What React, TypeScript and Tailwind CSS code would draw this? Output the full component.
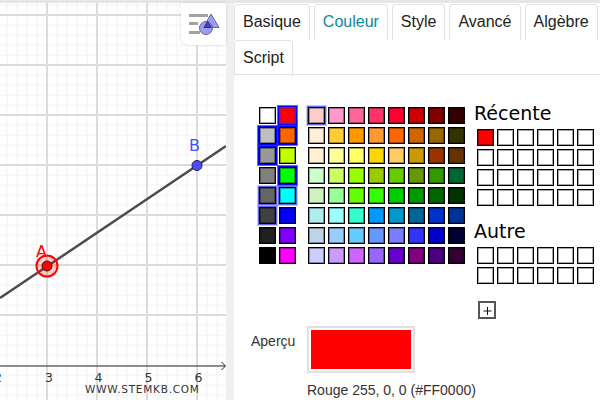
const SANS = "font-['Liberation_Sans',Arial,sans-serif]";
const DEJAVU = "font-['DejaVu_Sans',sans-serif]";

const TABS_TOP = ["Basique", "Couleur", "Style", "Avancé", "Algèbre"];

const PRIMARY = [
  ["#ffffff", "#ff0000"],
  ["#bfbfbf", "#ff6600"],
  ["#999999", "#c0ff00"],
  ["#808080", "#00ff00"],
  ["#666666", "#00ffff"],
  ["#404040", "#0000ff"],
  ["#202020", "#7f00ff"],
  ["#000000", "#ff00ff"],
];

const PALETTE = [
  ["#ffcccc", "#ff99cc", "#ff6699", "#ff3366", "#ff0033", "#cc0000", "#800000", "#330000"],
  ["#ffefd5", "#ffcc33", "#ff9900", "#ff9933", "#ff6600", "#cc6600", "#996600", "#333300"],
  ["#ffefd5", "#ffff99", "#ffff66", "#ffd700", "#ffcc66", "#cc9900", "#993300", "#663300"],
  ["#ccffcc", "#ccff66", "#99ff00", "#99cc00", "#66cc00", "#669900", "#339900", "#006633"],
  ["#d0f0c0", "#99ff99", "#66ff00", "#33ff00", "#00cc00", "#009900", "#006600", "#003300"],
  ["#afeeee", "#99ffff", "#33ffcc", "#0099ff", "#0099cc", "#006699", "#0033cc", "#003399"],
  ["#bcd4e6", "#99ccff", "#66ccff", "#6699ff", "#7d7dff", "#3333ff", "#0000cd", "#000033"],
  ["#ccccff", "#cc99ff", "#cc66ff", "#9966ff", "#6600cc", "#800080", "#4b0082", "#330033"],
];

// swatches drawn with a focus ring in the reference, keyed by colour
const STRONG_RING = ["#bfbfbf", "#999999", "#ff6600", "#00ff00"];
const SOFT_RING = ["#666666", "#404040", "#00ffff"];

function Swatch({ color, ring = false, soft = false }: { color?: string; ring?: boolean; soft?: boolean }) {
  let edge = "shadow-[inset_0_0_0_1px_#000,inset_0_0_0_2px_rgba(0,0,0,0.35)]";
  if (soft || (ring && color && SOFT_RING.includes(color))) {
    edge = "shadow-[inset_0_0_0_1px_#000,inset_0_0_0_2px_rgba(0,0,0,0.35),0_0_0_1px_#6464f0,0_0_0_2px_rgba(100,100,240,0.35)]";
  } else if (ring && color === "#ff0000") {
    edge = "shadow-[inset_0_0_0_1px_#7a1a90,inset_0_0_0_2px_rgba(122,26,144,0.5),0_0_0_1px_#0000ff,0_0_0_2px_rgba(0,0,255,0.6)]";
  } else if (ring && color && STRONG_RING.includes(color)) {
    edge = "shadow-[inset_0_0_0_1px_#000,inset_0_0_0_2px_rgba(0,0,0,0.35),0_0_0_1px_#0000ff,0_0_0_2px_rgba(0,0,255,0.6)]";
  }
  return <div className={`w-[17px] h-[17px] ${edge}`} style={{ backgroundColor: color ?? "#ffffff" }} />;
}

function EmptyGrid({ rows, first }: { rows: number; first?: string }) {
  return (
    <div className="grid grid-cols-6 gap-[3px] w-[117px]">
      {Array.from({ length: rows * 6 }).map((_, i) => (
        <Swatch key={i} color={i === 0 ? first : undefined} />
      ))}
    </div>
  );
}

function StyleIcon() {
  return (
    <svg width="32" height="26" viewBox="0 0 32 26">
      <rect x="0" y="1" width="19" height="3" fill="#a3a3a3" />
      <rect x="0" y="9" width="9" height="3" fill="#a3a3a3" />
      <rect x="0" y="18" width="11" height="3" fill="#a3a3a3" />
      <path d="M22 1 L30 14.5 H14 Z" fill="#9c9cf5" stroke="#6a6a8a" strokeWidth="1" />
      <circle cx="17" cy="15" r="6.5" fill="#9c9cf5" stroke="#6a6a8a" strokeWidth="1" />
      <path d="M18.5 8.5 L22.6 14.5 H15 Z" fill="#3c3ce0" stroke="#33335a" strokeWidth="1" />
    </svg>
  );
}

function Graph() {
  const minorX = Array.from({ length: 23 }, (_, i) => 7 + i * 10);
  const minorY = Array.from({ length: 40 }, (_, i) => 5 + i * 10);
  const majorX = [47, 97, 147, 197];
  const majorY = [15, 65, 115, 165, 215, 265, 315];
  return (
    <svg width="226" height="397" viewBox="0 3 226 397" className="block">
      {minorX.map((x) => (
        <line key={x} x1={x} x2={x} y1={3} y2={400} stroke="#f2f2f2" strokeWidth="1" />
      ))}
      {minorY.map((y) => (
        <line key={y} x1={0} x2={226} y1={y} y2={y} stroke="#f2f2f2" strokeWidth="1" />
      ))}
      {majorX.map((x) => (
        <line key={x} x1={x} x2={x} y1={3} y2={400} stroke="#dcdcdc" strokeWidth="2" />
      ))}
      {majorY.map((y) => (
        <line key={y} x1={0} x2={226} y1={y} y2={y} stroke="#dcdcdc" strokeWidth="2" />
      ))}

      <line x1="0" x2="225" y1="366" y2="366" stroke="#222" strokeWidth="1" />
      <path d="M221.5 362 L225.5 366 L221.5 370" fill="none" stroke="#222" strokeWidth="1" />

      <line x1="0" y1="298" x2="226" y2="146" stroke="#4d4d4d" strokeWidth="2.5" />

      <circle cx="47" cy="266" r="10.5" fill="#ff0000" fillOpacity="0.2" stroke="#ff0000" strokeWidth="2" />
      <circle cx="47" cy="266" r="5" fill="#ff0000" stroke="#4d1010" strokeWidth="1" />
      <circle cx="197" cy="165.5" r="5" fill="#4d4dff" stroke="#1c1c5c" strokeWidth="1" />

      <g className={DEJAVU}>
        <text x="36" y="257" fontSize="16" fill="#ff0000">A</text>
        <text x="189" y="151" fontSize="16" fill="#4d4dff">B</text>
        <g fontSize="12.5" fill="#333">
          <text x="-6" y="382">2</text>
          <text x="45" y="382">3</text>
          <text x="94.5" y="382">4</text>
          <text x="144.5" y="382">5</text>
          <text x="194.5" y="382">6</text>
        </g>
        <text x="85" y="393" fontSize="10.5" letterSpacing="0.75" fill="#333">WWW.STEMKB.COM</text>
      </g>
    </svg>
  );
}

function Tab({ label, active = false }: { label: string; active?: boolean }) {
  return (
    <div
      className={`h-[36px] px-2 pt-[5px] border border-[#e2e2e2] rounded-t-[4px] mr-1 text-base leading-[24px] ${
        active ? "border-b-white text-[#0b8a9a] bg-white" : "border-b-0 text-[#222]"
      }`}
    >
      {label}
    </div>
  );
}

export default function App() {
  return (
    <div className={`w-[600px] h-[400px] overflow-hidden bg-white flex flex-col ${SANS}`}>
      <div className="h-[3px] bg-[#e6e6e6] shrink-0" />
      <div className="flex flex-1 min-h-0">
        {/* Graphics view */}
        <div className="relative w-[226px] shrink-0">
          <Graph />
          <div className="absolute top-0 right-0 w-[45px] h-[42px] bg-white rounded-bl-lg shadow-[0_0_3px_rgba(0,0,0,0.15)] pl-[8px] pt-[10px]">
            <StyleIcon />
          </div>
        </div>
        <div className="w-[8px] shrink-0 bg-[#f0f0f0]" />

        {/* Properties panel */}
        <div className="flex-1 min-w-0">
          <div className="flex pt-px">
            {TABS_TOP.map((t) => (
              <Tab key={t} label={t} active={t === "Couleur"} />
            ))}
          </div>
          <div className="flex border-b border-[#e2e2e2] -mt-px pt-px h-[36px]">
            <Tab label="Script" />
          </div>

          <div className="flex pl-[25px] pt-[32px]">
            <div className="grid grid-cols-2 gap-[3px] h-fit">
              {PRIMARY.flat().map((c) => (
                <Swatch key={c} color={c} ring />
              ))}
            </div>
            <div className="grid grid-cols-8 gap-[3px] ml-[12px] h-fit">
              {PALETTE.flat().map((c, i) => (
                <Swatch key={i} color={c} soft={i === 0} />
              ))}
            </div>
            <div className={`ml-[12px] -mt-[5px] text-black ${DEJAVU}`}>
              <div className="text-[19px] leading-[22px] mb-[5px] -ml-[3px]">Récente</div>
              <EmptyGrid rows={4} first="#ff0000" />
              <div className="text-[19px] leading-[22px] mt-[14px] mb-[5px] -ml-[3px]">Autre</div>
              <EmptyGrid rows={2} />
              <div className="w-[18px] h-[18px] mt-[17px] ml-px border-2 border-[#555] flex items-center justify-center">
                <svg width="9" height="9" viewBox="0 0 9 9">
                  <path d="M0.5 5 H8.5 M4.5 1 V9" stroke="#111" strokeWidth="1" />
                </svg>
              </div>
            </div>
          </div>

          <div className="flex items-start pl-[17px] mt-[7px] text-[14px] text-[#333]">
            <span className="w-[56px] leading-[20px] mt-[5px]">Aperçu</span>
            <div className="w-[108px] h-[47px] border-2 border-[#e0e0e0] p-[2px]">
              <div className="w-full h-full bg-[#ff0000]" />
            </div>
          </div>
          <div className="pl-[73px] mt-[7px] text-[14px] leading-[20px] text-[#333]">Rouge 255, 0, 0 (#FF0000)</div>
        </div>
      </div>
    </div>
  );
}
